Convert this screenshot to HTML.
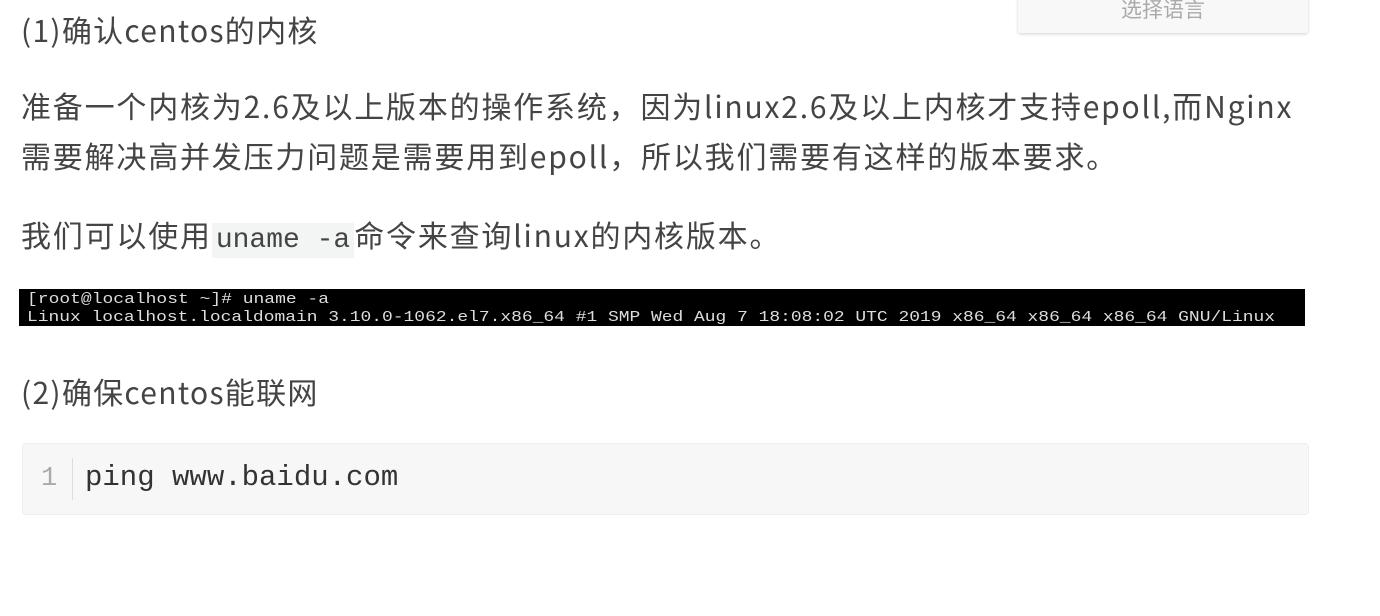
<!DOCTYPE html>
<html><head><meta charset="utf-8"><style>
body{margin:0;width:1380px;height:616px;background:#fff;overflow:hidden;position:relative;font-family:"Noto Sans CJK SC","Liberation Sans",sans-serif;color:#444;}
.a{position:absolute;white-space:nowrap;line-height:1.15;}
.btn{position:absolute;left:1018px;top:-10px;width:290px;height:43px;background:#f8f8f8;border-radius:3px;box-shadow:0 1px 3px rgba(0,0,0,.18);text-align:center;color:#aaa;font-size:21px;line-height:38px;}
code{font-family:"Liberation Mono",monospace;background:#f3f4f4;padding:2px 4px;font-size:28px;color:#444;letter-spacing:0;}
.pre{position:absolute;left:22px;top:443px;width:1287px;height:72px;background:#f7f7f7;border:1px solid #eee;border-radius:4px;box-sizing:border-box;}
.t{font-size:30px;letter-spacing:1.8px;}
.h{font-size:30px;letter-spacing:1.3px;}
</style></head><body>
<div class="btn">选择语言</div>
<div class="a h" style="left:21px;top:12px;">(1)确认centos的内核</div>
<div class="a t" style="left:21px;top:88px;">准备一个内核为2.6及以上版本的操作系统，因为linux2.6及以上内核才支持epoll,而Nginx</div>
<div class="a t" style="left:21px;top:138px;">需要解决高并发压力问题是需要用到epoll，所以我们需要有这样的版本要求。</div>
<div class="a t" style="left:21px;top:217px;">我们可以使用<code>uname -a</code>命令来查询linux的内核版本。</div>
<svg class="a" style="left:19px;top:289px" width="1286" height="37">
<rect width="1286" height="37" fill="#000"/>
<text x="8" y="14" fill="#ddd" font-family="Liberation Mono,monospace" font-size="15" textLength="302" lengthAdjust="spacingAndGlyphs">[root@localhost ~]# uname -a</text>
<text x="8" y="32" fill="#ddd" font-family="Liberation Mono,monospace" font-size="15" textLength="1248" lengthAdjust="spacingAndGlyphs">Linux localhost.localdomain 3.10.0-1062.el7.x86_64 #1 SMP Wed Aug 7 18:08:02 UTC 2019 x86_64 x86_64 x86_64 GNU/Linux</text>
</svg>
<div class="a h" style="left:21px;top:374px;">(2)确保centos能联网</div>
<div class="pre">
<div class="a" style="left:18px;top:20px;font-family:'Liberation Mono',monospace;font-size:27px;color:#aaa;">1</div>
<div class="a" style="left:49px;top:14px;width:1px;height:42px;background:#ddd;"></div>
<div class="a" style="left:62px;top:17px;font-family:'Liberation Mono',monospace;font-size:29px;color:#333;">ping www.baidu.com</div>
</div>
</body></html>
